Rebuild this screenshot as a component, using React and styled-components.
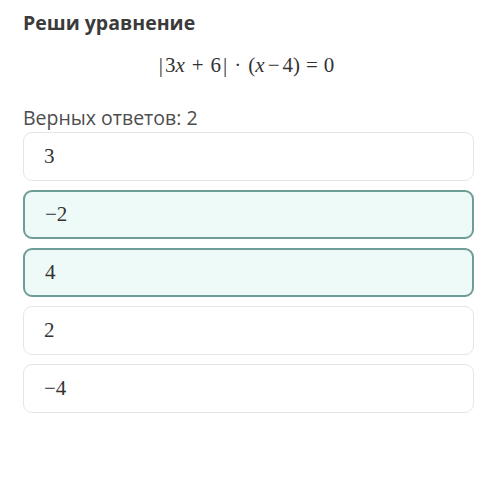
import React from 'react'
import styled, { createGlobalStyle } from 'styled-components'

const Global = createGlobalStyle`
  body {
    margin: 0;
    background: #ffffff;
    font-family: "Open Sans", "Noto Sans", sans-serif;
  }
`

const Page = styled.div`
  width: 500px;
  height: 503px;
  padding: 10px 26px 0 23px;
  box-sizing: border-box;
`

const Title = styled.h2`
  margin: 0;
  font-size: 19.5px;
  line-height: 26px;
  font-weight: 700;
  color: #3b3b3b;
`

const Formula = styled.div`
  margin-top: 15px;
  display: flex;
  justify-content: center;
  align-items: baseline;
  font-family: "Liberation Serif", "DejaVu Serif", serif;
  font-size: 21px;
  line-height: 28px;
  color: #333;
  padding-right: 4px;
  white-space: pre;
`

const Var = styled.i`
  font-style: italic;
`

const Op = styled.span`
  margin: 0 ${p => p.$space ?? 5}px;
`

const Count = styled.div`
  margin-top: 26px;
  font-size: 19.5px;
  line-height: 26px;
  color: #4d4d4d;
`

const List = styled.div`
  margin-top: 1px;
  display: flex;
  flex-direction: column;
  gap: 9px;
`

const Option = styled.div`
  height: 49px;
  box-sizing: border-box;
  display: flex;
  align-items: center;
  padding-left: 20px;
  border-radius: 9px;
  border: ${p => (p.$picked ? '2px solid #6e9c97' : '1.5px solid #e4e6e6')};
  background: ${p => (p.$picked ? '#eefaf7' : '#ffffff')};
  font-family: "Liberation Serif", "DejaVu Serif", serif;
  font-size: 21px;
  color: #333;
`

const answers = [
  { v: '3' },
  { v: '\u22122', picked: true },
  { v: '4', picked: true },
  { v: '2' },
  { v: '\u22124' },
]

export default function App() {
  return (
    <Page>
      <Global />
      <Title>Реши уравнение</Title>
      <Formula>
        <span>|</span>
        <Op $space={2}>3<Var>x</Var></Op>
        <Op $space={5}>+</Op>
        <Op $space={2}>6</Op>
        <span>|</span>
        <Op $space={7}>·</Op>
        <span>(<Var>x</Var></span>
        <Op $space={3}>−</Op>
        <span>4)</span>
        <Op $space={6}>=</Op>
        <span>0</span>
      </Formula>
      <Count>Верных ответов: 2</Count>
      <List>
        {answers.map((a, i) => (
          <Option key={i} $picked={a.picked}>{a.v}</Option>
        ))}
      </List>
    </Page>
  )
}
